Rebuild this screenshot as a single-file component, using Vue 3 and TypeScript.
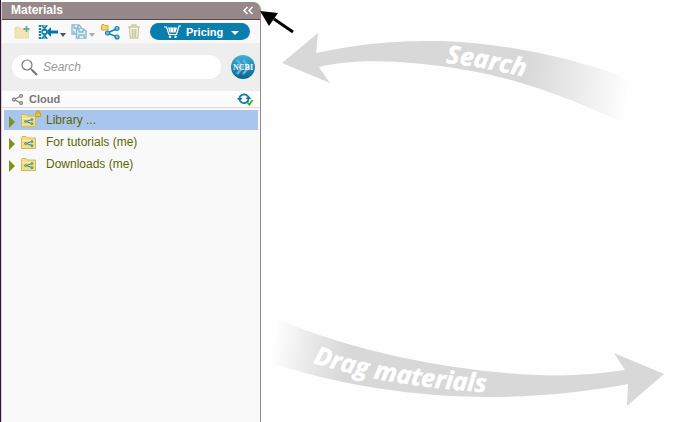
<script setup lang="ts">
import { ref } from 'vue'

interface Folder {
  id: number
  name: string
  locked: boolean
}

const folders: Folder[] = [
  { id: 1, name: 'Library ...', locked: true },
  { id: 2, name: 'For tutorials (me)', locked: false },
  { id: 3, name: 'Downloads (me)', locked: false },
]

const query = ref('')
const selected = ref(1)
</script>

<template>
  <div class="page">
    <aside class="panel">
      <header class="title-bar">
        <h1>Materials</h1>
        <button class="plain" aria-label="Collapse panel">
          <svg width="12" height="9" viewBox="0 0 12 9" fill="none" stroke="#fff" stroke-width="1.500">
            <path d="M5.500 1 2 4.500 5.500 8M10.500 1 7 4.500 10.500 8" />
          </svg>
        </button>
      </header>

      <div class="toolbar">
        <button class="plain" aria-label="New folder">
          <svg width="16" height="14" viewBox="0 0 16 14">
            <path d="M1 13V3l1-1h3l1.500 2h8v9z" fill="#f1e5b5" stroke="#e9dca6" />
            <path d="M12.500 1v6M9.500 4h6" stroke="#69aaa9" stroke-width="1.800" />
          </svg>
        </button>
        <button class="plain import" aria-label="Import">
          <svg width="20" height="14" viewBox="0 0 20 14" fill="none" stroke="#147ead">
            <path d="M2 0v14" stroke-width="2.500" stroke-dasharray="2 1" />
            <path d="M4 0c0 3 5 3.500 5 7s-5 4-5 7M9 0c0 3-5 3.500-5 7s5 4 5 7" stroke-width="1.500" />
            <path d="M5 1h3M5 5.500h3M5 8.500h3M5 13h3" />
            <path d="M8 7l5-5v3.500h7v3h-7V12z" fill="#0876a8" stroke="none" />
          </svg>
          <svg class="caret" width="6" height="4" viewBox="0 0 6 4"><path d="M0 0h6L3 4z" fill="#555" /></svg>
        </button>
        <button class="plain copy" aria-label="Save a copy">
          <svg width="16" height="15" viewBox="0 0 16 15" fill="#e2eff5" stroke="#82b9d1" stroke-width="1.300">
            <path d="M1 1h7l2 2v7H1z" />
            <path d="M3 1v3h4V1M3 10V7" />
            <path d="M5.500 5h7l2.500 2v7H5.500z" />
            <path d="M8 5v3h4V5M8 14v-3h5v3" />
          </svg>
          <svg class="caret" width="6" height="4" viewBox="0 0 6 4"><path d="M0 0h6L3 4z" fill="#aaa" /></svg>
        </button>
        <button class="plain share" aria-label="Share">
          <svg width="19" height="16" viewBox="0 0 19 16">
            <path d="M.5 6V1.500l.5-1h2l1 1h3V6z" fill="#f3d568" stroke="#d0aa34" />
            <path d="M16 4.500 6.500 9l9.500 4" fill="none" stroke="#1986b5" stroke-width="1.500" />
            <g fill="#73c4e4" stroke="#1582b0" stroke-width="1.200">
              <circle cx="16" cy="4.500" r="2" /><circle cx="6.500" cy="9" r="2" /><circle cx="16" cy="13" r="2" />
            </g>
          </svg>
        </button>
        <button class="plain trash" aria-label="Delete">
          <svg width="12" height="15" viewBox="0 0 12 15" fill="none" stroke="#cccba0" stroke-width="1.400">
            <path d="M0 3h12M4 3V1h4v2M1.500 3.500l.7 10.500h7.600l.7-10.500M4.200 5l.2 8M7.800 5l-.2 8M6 5v8" />
          </svg>
        </button>
        <button class="pricing">
          <svg width="17" height="13" viewBox="0 0 17 13">
            <path d="M0 2h2.500L5 9.500h7.500L15 1h2" fill="none" stroke="#fff" stroke-width="1.200" />
            <path d="M4 2.500h9L11.500 7.500H5.500z" fill="#fff" />
            <path d="M6.500 3v4M9.500 3v4" stroke="#0a7eac" stroke-width=".4" />
            <circle cx="6" cy="11.700" r="1.200" fill="#fff" /><circle cx="11.500" cy="11.700" r="1.200" fill="#fff" />
          </svg>
          <span>Pricing</span>
          <svg class="more" width="8" height="4" viewBox="0 0 8 4"><path d="M0 0h8L4 4z" fill="#fff" /></svg>
        </button>
      </div>

      <div class="search-row">
        <label class="search-box">
          <svg width="17" height="17" viewBox="0 0 17 17" fill="none" stroke="#777">
            <circle cx="6" cy="6" r="5" stroke-width="1.200" />
            <path d="m9.500 9.500 2 2" stroke-width="1.200" />
            <path d="m11 11 5 5" stroke-width="2.200" />
          </svg>
          <input v-model="query" type="text" placeholder="Search" aria-label="Search" />
        </label>
        <button class="ncbi">
          <svg width="24" height="24" viewBox="0 0 24 24" aria-hidden="true" fill="none" stroke="#69b3d0" stroke-width="2.500">
            <path d="m6 5 6 7-6 7M12 5l6 7-6 7" />
          </svg>
          <span>NCBI</span>
        </button>
      </div>

      <div class="section">
        <svg width="11" height="11" viewBox="0 0 11 11" fill="none" stroke="#858585" stroke-width="1.300">
          <path d="m3.300 5 4.500-2.500M3.300 6.200l4.500 2.300" />
          <circle cx="2" cy="5.600" r="1.400" /><circle cx="9" cy="2" r="1.400" /><circle cx="9" cy="9" r="1.400" />
        </svg>
        <h2>Cloud</h2>
        <button class="plain" aria-label="Synchronise">
          <svg width="17" height="13" viewBox="0 0 17 13" fill="none">
            <path d="M2.500 6c0-5 6-6 8.500-2.500M11.500 5.500c0 5-6 6-8.500 2.500" stroke="#0c79aa" stroke-width="1.800" />
            <path d="M0 5h5.500L2.800 8.500zM8.700 6h5.500l-2.700-3.500z" fill="#0c79aa" />
            <path d="m10.500 9.500 1.800 2.200L15.500 7" stroke="#34b51a" stroke-width="1.800" />
          </svg>
        </button>
      </div>

      <ul class="tree">
        <li v-for="folder in folders" :key="folder.id">
          <button class="node" :class="{ active: folder.id === selected }" @click="selected = folder.id">
            <svg class="twisty" width="6" height="12" viewBox="0 0 6 12"><path d="M0 0v12l6-6z" fill="#81911d" /></svg>
            <span class="folder">
              <svg width="15" height="13" viewBox="0 0 15 13">
                <path d="M.5 12.500v-11l.5-1h4L6.500 2h8v10.500z" fill="#f4dd83" stroke="#d5b958" />
                <path d="M1 4.500h13" stroke="#faecac" />
                <path d="M11 5.500 5 7.500l6 2" fill="none" stroke="#278d91" />
                <g fill="#86c9ba" stroke="#278d91" stroke-width=".8">
                  <circle cx="11" cy="5.500" r="1" /><circle cx="4.500" cy="7.500" r="1" /><circle cx="11" cy="9.700" r="1" />
                </g>
              </svg>
              <svg v-if="folder.locked" class="lock" width="6" height="7" viewBox="0 0 6 7">
                <path d="M1.500 3V2a1.500 1.500 0 0 1 3 0v1" fill="none" stroke="#c99d1d" />
                <path d="M.5 3h5v3.500h-5z" fill="#f0c43d" stroke="#d2a017" />
              </svg>
            </span>
            <span>{{ folder.name }}</span>
          </button>
        </li>
      </ul>
    </aside>

    <main class="stage">
      <svg class="pointer" width="42" height="36" viewBox="0 0 42 36">
        <path d="M17 18 36 31" stroke="#000" stroke-width="3" />
        <path d="m3 10 18 2-9 13z" />
      </svg>

      <svg class="hint" viewBox="261 0 420 130">
        <defs>
          <linearGradient id="fade-right" gradientUnits="userSpaceOnUse" x1="525" y1="62" x2="630" y2="72">
            <stop offset="0" stop-color="#d8d8d8" />
            <stop offset=".4" stop-color="#e6e6e6" />
            <stop offset="1" stop-color="#fefefe" />
          </linearGradient>
          <path id="search-line" d="M446 63Q488 67 540 81" />
        </defs>
        <path fill="url(#fade-right)" d="M282 63 318 33 316 53C370 42 400 41 440 41Q534 44 630 79V126C550 88 495 73 440 66C395 60 350 59 319 67L330 83Z" />
        <text class="hint-text"><textPath href="#search-line">Search</textPath></text>
      </svg>

      <svg class="hint" viewBox="261 310 420 112">
        <defs>
          <linearGradient id="fade-left" gradientUnits="userSpaceOnUse" x1="274" y1="341" x2="350" y2="351">
            <stop offset="0" stop-color="#fefefe" />
            <stop offset=".6" stop-color="#e4e4e4" />
            <stop offset="1" stop-color="#d8d8d8" />
          </linearGradient>
          <path id="drag-line" d="M313 363Q395 388 500 393" />
        </defs>
        <path fill="url(#fade-left)" d="M274 318Q370 358 485 371C540 377 580 377 625 370L614 353 664 374 627 406 628 384C580 393 535 397 485 397Q375 396 274 364Z" />
        <text class="hint-text"><textPath href="#drag-line">Drag materials</textPath></text>
      </svg>
    </main>
  </div>
</template>

<style>
body {
  background: #fefefe;
}
</style>

<style scoped>
.page {
  display: flex;
  min-height: 100vh;
  box-sizing: border-box;
  padding-top: 2px;
  border-left: 1px solid #35152f;
  font-family: "Liberation Sans", Arial, sans-serif;
  font-size: 12px;
}

button {
  font: inherit;
  cursor: pointer;
}

h1,
h2,
ul {
  margin: 0;
  padding: 0;
  font-size: 11px;
}

h1 {
  font-size: 12px;
  line-height: 17px;
}

svg {
  display: block;
  flex: none;
}

.plain {
  display: flex;
  padding: 0;
  border: 0;
  background: none;
}

.panel {
  flex: none;
  width: 260px;
  box-sizing: border-box;
  border-left: 1px solid #d4ced2;
  border-right: 1px solid #978889;
  border-top-right-radius: 8px;
  background: #f9f9f9;
}

.title-bar {
  display: flex;
  align-items: center;
  justify-content: space-between;
  height: 17px;
  padding: 0 6px 0 9px;
  border-bottom: 1px solid #54474a;
  border-top-right-radius: 7px;
  background: #978889;
  color: #fff;
}

.toolbar {
  display: flex;
  align-items: center;
  height: 23px;
  padding: 0 10px 0 12px;
  background: #f9f9f9;
}

.import,
.copy {
  align-items: center;
  gap: 2px;
  margin-left: 8px;
}

.copy {
  margin-left: 5px;
}

.caret {
  margin-top: 6px;
}

.share {
  margin-left: 6px;
}

.trash {
  margin-left: 8px;
}

.pricing {
  display: flex;
  align-items: center;
  height: 17px;
  width: 100px;
  margin-left: auto;
  padding: 0 11px 0 14px;
  gap: 5px;
  border: 0;
  border-radius: 9px;
  background: #0a7eac;
  color: #fff;
  font-weight: bold;
  font-size: 11px;
}

.more {
  margin: 2px 0 0 auto;
}

.search-row {
  display: flex;
  align-items: center;
  gap: 10px;
  height: 48px;
  padding: 0 5px 0 10px;
  background: #eee;
}

.search-box {
  display: flex;
  flex: 1;
  align-items: center;
  gap: 5px;
  min-width: 0;
  height: 24px;
  padding: 0 9px;
  border-radius: 12px;
  background: #fff;
}

.search-box input {
  flex: 1;
  min-width: 0;
  padding: 0;
  border: 0;
  outline: 0;
  background: none;
  font: 12px "Liberation Sans", Arial, sans-serif;
}

.search-box input::placeholder {
  color: #999;
  font-style: italic;
}

.ncbi {
  display: grid;
  place-items: center;
  width: 24px;
  height: 24px;
  padding: 0;
  border: 0;
  border-radius: 50%;
  background: linear-gradient(#3ab3d8, #07648f);
  color: #fff;
  font: bold 8px "Liberation Serif", serif;
}

.ncbi > * {
  grid-area: 1 / 1;
}

.section {
  display: flex;
  align-items: center;
  gap: 6px;
  height: 16px;
  padding: 0 6px 0 10px;
  border-bottom: 1px solid #dcdcdc;
  background: linear-gradient(#fff, #f9f9f9);
  color: #777;
}

.section .plain {
  margin-left: auto;
}

.tree {
  display: grid;
  gap: 2px;
  padding: 2px 2px 0;
  list-style: none;
}

.node {
  display: flex;
  align-items: center;
  width: 100%;
  height: 20px;
  padding: 0 5px;
  border: 0;
  background: none;
  color: #5f6600;
  font-size: 12px;
}

.node.active {
  background: #a8c5ee;
}

.twisty {
  margin-top: 3px;
}

.folder {
  position: relative;
  margin: 0 10px 0 6px;
}

.lock {
  position: absolute;
  top: -4px;
  right: -5px;
}

.stage {
  position: relative;
  display: flex;
  flex: 1;
  flex-direction: column;
  justify-content: space-between;
  min-width: 0;
  margin-top: -2px;
}

.hint {
  width: 100%;
}

.hint-text {
  fill: #fff;
  stroke: #fff;
  stroke-width: .5px;
  font: italic bold 25px "Open Sans", "Noto Sans", sans-serif;
}

.pointer {
  position: absolute;
  top: 1px;
  left: -4px;
}
</style>
